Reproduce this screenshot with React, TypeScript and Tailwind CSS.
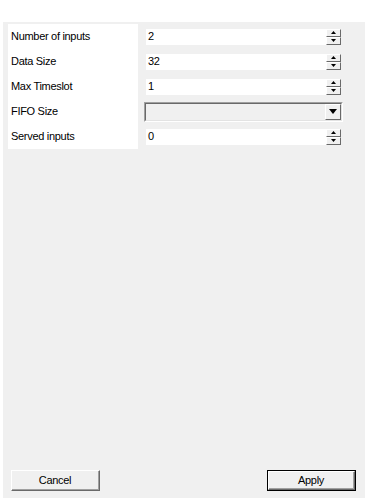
import React from "react";

const font = { fontFamily: '"Liberation Sans", Arial, sans-serif' };

function Arrow({ up }: { up?: boolean }) {
  return (
    <svg width="5" height="3" viewBox="0 0 5 3" className="block">
      {up ? (
        <polygon points="2.5,0 5,3 0,3" fill="#000" />
      ) : (
        <polygon points="0,0 5,0 2.5,3" fill="#000" />
      )}
    </svg>
  );
}

function SpinBtn({ up }: { up?: boolean }) {
  return (
    <div className="w-[15px] h-[8px] bg-[#f0f0f0] border-t border-l border-t-white border-l-white border-r border-b border-r-[#696969] border-b-[#696969] flex items-center justify-center">
      <Arrow up={up} />
    </div>
  );
}

function Spin({ value }: { value: string }) {
  return (
    <div className="h-[16px] w-[195px] bg-white flex items-center justify-between">
      <span className="pl-[2px] text-[11px] tracking-[-0.3px] text-black leading-none">{value}</span>
      <div className="flex flex-col">
        <SpinBtn up />
        <SpinBtn />
      </div>
    </div>
  );
}

function Combo() {
  return (
    <div className="w-[199px] h-[20px] -ml-[2px] border-t border-l border-t-[#a0a0a0] border-l-[#a0a0a0] border-r border-b border-r-white border-b-white">
      <div className="w-full h-full border-t border-l border-t-[#696969] border-l-[#696969] border-r border-b border-r-[#e3e3e3] border-b-[#e3e3e3] bg-[#f0f0f0] flex justify-end">
        <div className="w-[16px] h-full bg-[#f0f0f0] border-t border-l border-t-white border-l-white border-r border-b border-r-[#696969] border-b-[#696969] flex items-center justify-center">
          <svg width="8" height="5" viewBox="0 0 8 5" className="block">
            <polygon points="0,0 8,0 4,5" fill="#000" />
          </svg>
        </div>
      </div>
    </div>
  );
}

const labels = ["Number of inputs", "Data Size", "Max Timeslot", "FIFO Size", "Served inputs"];

export default function App() {
  return (
    <div className="w-[368px] h-[501px] bg-white pt-[22px] pl-[3px] pr-[3px] pb-[3px]" style={font}>
      <div className="w-[362px] h-[476px] bg-[#f0f0f0] flex flex-col">
        <div className="flex pt-[2px] pl-[5px] gap-[8px]">
          <div className="w-[130px] bg-white flex flex-col">
            {labels.map((l) => (
              <div key={l} className="h-[25px] flex items-center pl-[3px] text-[11px] tracking-[-0.3px] text-black">
                {l}
              </div>
            ))}
          </div>
          <div className="flex flex-col">
            <div className="h-[25px] flex items-center"><Spin value="2" /></div>
            <div className="h-[25px] flex items-center"><Spin value="32" /></div>
            <div className="h-[25px] flex items-center"><Spin value="1" /></div>
            <div className="h-[25px] flex items-center"><Combo /></div>
            <div className="h-[25px] flex items-center"><Spin value="0" /></div>
          </div>
        </div>
        <div className="flex-1" />
        <div className="flex justify-between pl-[8px] pr-[9px] pb-[7px]">
          <div className="w-[89px] h-[21px] border-t border-l border-t-white border-l-white border-r border-b border-r-[#696969] border-b-[#696969]">
            <div className="w-full h-full border-r border-b border-r-[#a0a0a0] border-b-[#a0a0a0] bg-[#f0f0f0] flex items-center justify-center text-[11px] tracking-[-0.3px] text-black">
              Cancel
            </div>
          </div>
          <div className="w-[89px] h-[21px] border border-black">
            <div className="w-full h-full border-t border-l border-t-white border-l-white border-r border-b border-r-[#696969] border-b-[#696969]">
              <div className="w-full h-full border-r border-b border-r-[#a0a0a0] border-b-[#a0a0a0] bg-[#f0f0f0] flex items-center justify-center text-[11px] tracking-[-0.3px] text-black">
                Apply
              </div>
            </div>
          </div>
        </div>
      </div>
    </div>
  );
}
